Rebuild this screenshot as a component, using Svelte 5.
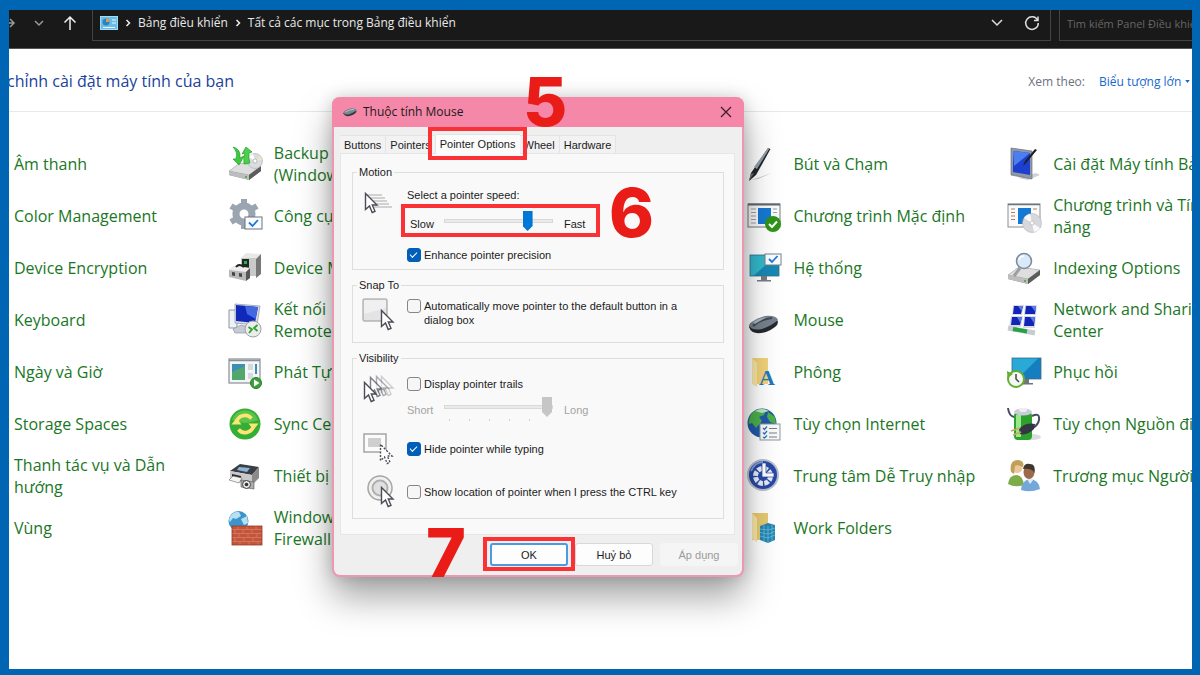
<script>
  const columns = [
    {
      col: 1,
      items: [
        { label: 'Âm thanh' },
        { label: 'Color Management' },
        { label: 'Device Encryption' },
        { label: 'Keyboard' },
        { label: 'Ngày và Giờ' },
        { label: 'Storage Spaces' },
        { label: 'Thanh tác vụ và Dẫn\nhướng' },
        { label: 'Vùng' }
      ]
    },
    {
      col: 2,
      items: [
        { icon: 'backup', label: 'Backup\n(Windows' },
        { icon: 'tools', label: 'Công cụ' },
        { icon: 'devices', label: 'Device M' },
        { icon: 'remote', label: 'Kết nối\nRemote' },
        { icon: 'autoplay', label: 'Phát Tự' },
        { icon: 'sync', label: 'Sync Cen' },
        { icon: 'printer', label: 'Thiết bị' },
        { icon: 'firewall', label: 'Windows\nFirewall' }
      ]
    },
    {
      col: 4,
      items: [
        { icon: 'pen', label: 'Bút và Chạm' },
        { icon: 'defaults', label: 'Chương trình Mặc định' },
        { icon: 'system', label: 'Hệ thống' },
        { icon: 'mouse', label: 'Mouse' },
        { icon: 'fonts', label: 'Phông' },
        { icon: 'internet', label: 'Tùy chọn Internet' },
        { icon: 'access', label: 'Trung tâm Dễ Truy nhập' },
        { icon: 'workfolders', label: 'Work Folders' }
      ]
    },
    {
      col: 5,
      items: [
        { icon: 'tablet', label: 'Cài đặt Máy tính Bảng' },
        { icon: 'programs', label: 'Chương trình và Tính\nnăng' },
        { icon: 'indexing', label: 'Indexing Options' },
        { icon: 'network', label: 'Network and Sharing\nCenter' },
        { icon: 'recovery', label: 'Phục hồi' },
        { icon: 'power', label: 'Tùy chọn Nguồn điện' },
        { icon: 'users', label: 'Trương mục Người' }
      ]
    }
  ];
  let speed = $state(8);
  let trail = $state(10);
  let precision = $state(true);
  let snap = $state(false);
  let trails = $state(false);
  let hide = $state(true);
  let locate = $state(false);
</script>

{#snippet arrow(x, y, o = 1, dash = false)}
  <path
    transform="translate({x} {y})"
    d="M.5 .5V16.500L4.500 13L7.200 19.500L10 18.300L7.300 12H12Z"
    fill="#fff"
    stroke="#4a4d55"
    stroke-width="1.400"
    opacity={o}
    stroke-dasharray={dash ? '2 1.500' : 'none'}
  />
{/snippet}

{#snippet drive()}
  <path d="M2 25L13 17L34 20V25L22 34L2 29Z" fill="#8b8b8b" />
  <path d="M2 25L13 17L34 20L22 29Z" fill="#dedede" stroke="#aaa" stroke-width=".5" />
  <path d="M2 25L22 29V34L2 29Z" fill="#bdbdbd" />
  <path d="M22 29L34 20V25L22 34Z" fill="#5c5c5c" />
  <circle cx="19" cy="31" r="1" fill="#27b427" />
{/snippet}

{#snippet icon(name)}
  <svg class="icon" viewBox="0 0 36 36" aria-hidden="true">
    {#if name === 'backup'}
      {@render drive()}
      <circle cx="28" cy="15" r="7.500" fill="#d9dce0" stroke="#b3b5ba" stroke-width=".7" />
      <path d="M28 15L33 10A7 7 0 0 1 35 14Z" fill="#f0e4c8" />
      <path d="M28 15L22 11A7 7 0 0 1 26 8Z" fill="#fff" />
      <circle cx="28" cy="15" r="2" fill="#fff" stroke="#999" stroke-width=".6" />
      <path d="M6 1Q14 3 13 12L17 10L12 19L6 13L9 13Q11 6 6 1Z" fill="#3fc93f" stroke="#1f9d28" stroke-width=".7" />
      <path d="M15 8L19 1L25 6L22 7Q21 12 23 17L17 18Q16 12 18 7Z" fill="#4bd04a" stroke="#1f9d28" stroke-width=".7" />
    {:else if name === 'tools'}
      <circle cx="17" cy="16" r="8" fill="none" stroke="#9aa5b1" stroke-width="7" />
      <g stroke="#9aa5b1" stroke-width="6">
        <path d="M17 6V1M17 26V31M9 11L4 8M25 11L30 8M9 21L4 24M25 21L29 24" />
      </g>
      <rect x="18" y="19" width="17" height="12" fill="#fafcff" stroke="#6b747e" />
      <path d="M22 24.500L25.500 28L31 22" fill="none" stroke="#1c79d8" stroke-width="1.800" />
    {:else if name === 'devices'}
      <path d="M14 8L19 3L34 4L29 9Z" fill="#e8e8e8" />
      <path d="M29 9L34 4V24L29 28Z" fill="#777" />
      <rect x="14" y="8" width="15" height="18" fill="#c9c9c9" />
      <rect x="15" y="9" width="7" height="9" fill="#1c2b22" />
      <path d="M17 11H20V14H17Z" fill="#2faf52" />
      <path d="M2 20L7 16L23 18L19 22V31L2 27Z" fill="#b9b9b9" />
      <path d="M2 20L7 16L23 18L19 22Z" fill="#ededed" />
      <path d="M19 22L23 18V28L19 31Z" fill="#555" />
      <path d="M5 22L8 22.500V26L5 25.500ZM12 23L15 23.500V27L12 26.500Z" fill="#444" />
      <path d="M9 17Q12 13 17 17" stroke="#222" stroke-width="2" fill="none" />
    {:else if name === 'remote'}
      <path d="M2 8H10V26H2Z" fill="#eef1f5" stroke="#8b93a3" />
      <path d="M8 2L33 4L30 23L8 21Z" fill="#d9dde5" stroke="#8b93a3" stroke-width=".7" />
      <path d="M9 3L31 5L28 21L9 19Z" fill="#1029b8" />
      <path d="M18 4L31 5L28.500 17L20 12Z" fill="#4467e2" />
      <path d="M6 27L14 23L22 25L20 31H8Z" fill="#c6cbd4" stroke="#8b93a3" stroke-width=".7" />
      <circle cx="26" cy="27" r="8" fill="#ececec" stroke="#9da0a5" />
      <path d="M21.500 25L25 27.500L22 31M30.500 23L27 26L30.500 29" fill="none" stroke="#2da32d" stroke-width="1.800" />
    {:else if name === 'autoplay'}
      <rect x="2" y="5" width="31" height="24" fill="#f3f5f7" stroke="#8a9097" stroke-width="1.200" />
      <path d="M2 6.500H33" stroke="#8a9097" stroke-width="1.500" />
      <rect x="5" y="10" width="13" height="16" fill="#3d8fb4" />
      <path d="M5 26V18L18 12V26Z" fill="#52a86c" />
      <path d="M21 10H26V16H21ZM21 19H26V25H21Z" fill="#d6dade" />
      <path d="M29 10V20" stroke="#3d8fb4" stroke-width="2" />
      <circle cx="29" cy="29" r="5.500" fill="#3e9f3b" stroke="#2b7c2a" />
      <path d="M27 25.500L32.500 29L27 32.500Z" fill="#fff" />
    {:else if name === 'sync'}
      <circle cx="18" cy="18" r="15.500" fill="#35ae35" />
      <path d="M5 14A13.500 13.500 0 0 1 31 14Q18 20 5 14Z" fill="#5ac548" />
      <path d="M9.500 17A8.500 8.500 0 0 1 24.500 12.500" fill="none" stroke="#fbe675" stroke-width="3.600" />
      <path d="M26.500 19A8.500 8.500 0 0 1 11.500 23.500" fill="none" stroke="#fbe675" stroke-width="3.600" />
      <path d="M4.500 18.500L9.500 12L14.500 18.500ZM21.500 17.500L26.500 24L31.500 17.500Z" fill="#fbe675" />
    {:else if name === 'printer'}
      <path d="M3 13L13 6L32 9L25 17Z" fill="#3b3e44" />
      <path d="M12 9L23 10L20 14L10 12Z" fill="#8ab7d8" />
      <path d="M3 13L25 17V27L3 22Z" fill="#c9c9c9" />
      <path d="M25 17L32 9V20L25 27Z" fill="#8a8a8a" />
      <path d="M5 16L14 18V21L5 19Z" fill="#25272a" />
      <path d="M2 22L6 18L15 20L12 25Z" fill="#f3f3f3" stroke="#666" stroke-width=".6" />
      <path d="M14 22L27 24V31L14 29Z" fill="#a9acb1" stroke="#555" stroke-width=".6" />
      <circle cx="19.500" cy="26.500" r="4" fill="#e6e6e6" stroke="#444" />
      <circle cx="19.500" cy="26.500" r="1.800" fill="#333" />
    {:else if name === 'firewall'}
      <circle cx="11.500" cy="11" r="10" fill="#3d94cc" />
      <path d="M4 5Q8 1 12 2L14 6L9 9L6 8L3 12Q1 9 4 5ZM14 9L20 6L21 13L17 15Z" fill="#b7e0f2" />
      <rect x="5" y="16" width="30" height="19" fill="#c3553b" />
      <path d="M5 19.500H35M5 23.500H35M5 27.500H35M5 31.500H35M11 16V19.500M20 16V19.500M29 16V19.500M8 20V23.500M16 20V23.500M25 20V23.500M12 24V27.500M21 24V27.500M30 24V27.500M8 28V31.500M17 28V31.500M26 28V31.500M13 32V35M22 32V35M31 32V35" stroke="#d98468" stroke-width=".7" />
      <rect x="5" y="16" width="30" height="19" fill="none" stroke="#983b26" stroke-width=".8" />
    {:else if name === 'pen'}
      <path d="M5 34L26 27L12 33Z" fill="#ccc" />
      <path d="M22 2L24.500 3L10 29L3 35L5 27Z" fill="#23272c" />
      <path d="M22 2L23.500 2.500L11 23L8 21Z" fill="#8fa0ab" />
      <path d="M5 28L8 27L3 35Z" fill="#6b767d" />
    {:else if name === 'defaults'}
      <rect x="2" y="6" width="32" height="23" fill="#fafafa" stroke="#777c82" />
      <path d="M2 6.500H34" stroke="#62686e" stroke-width="2" />
      <path d="M5 11H10M5 14.500H10M5 18H10M5 21.500H10M5 25H10M27 11H31M27 14.500H31" stroke="#9aa0a6" />
      <rect x="12" y="10" width="13" height="16" fill="#1679d3" />
      <circle cx="27" cy="26" r="8" fill="#2f9418" />
      <path d="M23 26L26 29L31 23.500" fill="none" stroke="#fff" stroke-width="2" />
    {:else if name === 'system'}
      <rect x="4" y="5" width="29" height="21" fill="#1689b5" stroke="#3d6d80" stroke-width=".8" />
      <path d="M4.500 5.500H30L8 25.500H4.500Z" fill="#34b9cc" />
      <path d="M15 26H21V30H25V31.500H11V30H15Z" fill="#777d82" />
      <rect x="19" y="4" width="16" height="11" fill="#fbfdff" stroke="#75808a" />
      <path d="M23 9L26 12L31.500 6" fill="none" stroke="#1c79d8" stroke-width="1.800" />
    {:else if name === 'mouse'}
      <path d="M3 25Q4 19 18 15Q30 13 32 20Q32 25 20 30Q6 34 3 25Z" fill="#25282c" />
      <path d="M3 23Q6 18 19 14Q30 13 32 18Q27 23 16 27Q5 29 3 23Z" fill="#77828e" />
      <path d="M7 24Q13 18 26 16" fill="none" stroke="#414a53" stroke-width="2" />
      <path d="M7 20Q13 16 21 15L14 19L9 22Z" fill="#a9b4be" />
    {:else if name === 'fonts'}
      <path d="M6 4H22V30L11 30L6 29Z" fill="#f2d37a" />
      <path d="M6 4L11 9V33L6 30Z" fill="#fae7a8" />
      <text x="13" y="31" font-family="Liberation Serif" font-weight="bold" font-size="22" fill="#1f79b8">A</text>
    {:else if name === 'internet'}
      <circle cx="16" cy="17" r="14.500" fill="#2159a9" />
      <path d="M6 7Q12 1 20 4L18 9L13 11L16 15L10 22L6 17L3 18Q2 12 6 7ZM22 6L29 11L30 18L24 16L21 11Z" fill="#4cb04c" />
      <path d="M9 5Q16 1 23 5L16 7Z" fill="#b8e6c0" />
      <rect x="14" y="18" width="20" height="16" fill="#f8fafc" stroke="#8f979f" />
      <path d="M17 22L18.500 23.500L21 20.500M17 26.500L18.500 28L21 25M17 31L18.500 32L21 29.500" fill="none" stroke="#2a72ba" stroke-width="1.300" />
      <path d="M23 22.500H31M23 27H31M23 31H31" stroke="#798087" />
    {:else if name === 'access'}
      <circle cx="17" cy="17" r="15" fill="#2949a6" stroke="#b9bfcc" stroke-width="2" />
      <circle cx="17" cy="18" r="7.500" fill="none" stroke="#e8effb" stroke-width="5" stroke-dasharray="4.500 1.400" />
      <path d="M16 5H20V15H28V19H16Z" fill="#fff" stroke="#2949a6" stroke-width=".7" />
      <path d="M5 13Q9 4 17 4" stroke="#7f9ae0" stroke-width="2" fill="none" />
    {:else if name === 'workfolders'}
      <path d="M6 3H22V30H6Z" fill="#e8ca73" />
      <path d="M6 3L11 8V32L6 29Z" fill="#fae7a8" />
      <path d="M14 16L22 13L29 15V30L22 33L14 30Z" fill="#2387b4" />
      <path d="M14 19L22 20L29 18M14 22.500L22 24L29 21.500M14 26L22 28L29 25M18 15V31M22 16V33M26 15V31" fill="none" stroke="#6dbcdb" stroke-width=".8" />
    {:else if name === 'tablet'}
      <path d="M12 32L30 27L34 29L22 34Z" fill="#d2d2d2" />
      <path d="M5 2L26 5V33L5 29Z" fill="#9098a5" stroke="#6b7380" stroke-width=".7" />
      <path d="M7 5L24 7V29L7 26Z" fill="#1d3fd0" />
      <path d="M7 5L24 7L8 20Z" fill="#4c7ef0" />
      <path d="M31 4L20 17L17 20L19 15L29 3Z" fill="#1d1f24" />
    {:else if name === 'programs'}
      <rect x="2" y="6" width="32" height="23" fill="#fafafa" stroke="#8b9096" />
      <path d="M2 6.500H34" stroke="#6f757b" stroke-width="1.500" />
      <path d="M5 11H9M5 14.500H9M5 18H9M5 21.500H9M27 11H31" stroke="#b17c6c" />
      <rect x="12" y="10" width="13" height="16" fill="#1679d3" />
      <circle cx="26" cy="25" r="9.500" fill="#d6d8db" stroke="#b1b4b8" stroke-width=".6" />
      <path d="M26 25L18 20A9 9 0 0 1 24 16ZM26 25L34 30A9 9 0 0 1 28 34Z" fill="#fafafa" />
      <circle cx="26" cy="25" r="2" fill="#fff" stroke="#aaa" stroke-width=".6" />
    {:else if name === 'indexing'}
      {@render drive()}
      <path d="M14 18L8 26" stroke="#9b9ea3" stroke-width="3" />
      <circle cx="18" cy="11" r="7.500" fill="#d9ebfa" stroke="#7f8b99" stroke-width="1.600" />
      <path d="M13 10Q14 6 18 6" stroke="#fff" stroke-width="1.500" fill="none" />
    {:else if name === 'network'}
      <path d="M7 3H18L16 13H6ZM19 3H31L30 13H18ZM5 14H17L15 25H3ZM18 14H30L29 26H17Z" fill="#d5dae4" />
      <path d="M8 4H17L15 12H7ZM20 4H30L29 12H19ZM6 15H16L14 23H5ZM19 15H29L28 24H18Z" fill="#1325b8" />
      <path d="M12 4H17L15.500 9ZM25 4H30L29.500 10ZM11 15H16L14.500 21ZM24 15H29L28 21Z" fill="#5c7be8" />
      <path d="M2 26L29 31" stroke="#c8ccd0" stroke-width="5" />
      <path d="M7 27L21 29.500" stroke="#25a344" stroke-width="4" />
    {:else if name === 'recovery'}
      <rect x="6" y="4" width="29" height="21" fill="#147ec0" stroke="#416d84" stroke-width=".8" />
      <path d="M6.500 4.500H32L12 24.500H6.500Z" fill="#2aa9d6" />
      <path d="M18 25H23V29H27V30.500H15V29H18Z" fill="#6f757a" />
      <circle cx="10" cy="25" r="8" fill="#f5f7f5" stroke="#65ad2c" stroke-width="2" />
      <path d="M1 17L1.500 24L7 20Z" fill="#65ad2c" />
      <path d="M10 20V25L13 28" fill="none" stroke="#444" stroke-width="1.500" />
    {:else if name === 'power'}
      <ellipse cx="26" cy="31" rx="9" ry="3" fill="#ddd" />
      <path d="M2 2Q3 10 8 11M26 10Q34 6 33 14Q32 19 27 22" stroke="#454c60" stroke-width="2" fill="none" />
      <rect x="8" y="6" width="18" height="28" rx="4" fill="#2ca22c" />
      <path d="M10 9H15V31H10Z" fill="#9be78d" />
      <ellipse cx="17" cy="6" rx="9" ry="3.500" fill="#c9ccdc" />
      <ellipse cx="17" cy="4" rx="4" ry="2" fill="#eee" />
      <path d="M13 23Q20 16 29 18L28 23Q21 30 14 28Z" fill="#323743" />
      <path d="M5 25L14 22M7 29L15 26" stroke="#c6a869" stroke-width="1.800" />
    {:else if name === 'users'}
      <path d="M2 26Q3 17 11 17Q17 18 18 27Q9 30 2 26Z" fill="#7eac4a" />
      <circle cx="11" cy="9.500" r="5.500" fill="#edc79c" />
      <path d="M5 14Q3 2 12 2Q19 3 17 9Q11 6 9 8L8 16Z" fill="#c1a15a" />
      <path d="M15 32Q16 22 24 21Q33 22 34 31Q24 35 15 32Z" fill="#75a8da" />
      <path d="M21 21L24 26L28 21Z" fill="#dcecf8" />
      <ellipse cx="23" cy="14" rx="5.500" ry="7" fill="#9d6b4a" />
      <path d="M17 11Q18 5 24 6Q30 6 28.500 15Q26 10 17 11Z" fill="#3f3831" />
    {/if}
  </svg>
{/snippet}

<div class="screen">
  <header class="topbar">
    <div class="nav">
      <svg class="forward" viewBox="0 0 12 14" aria-hidden="true"><path d="M0 7H4M1 3L5 7L1 11" /></svg>
      <svg class="recent" viewBox="0 0 12 14" aria-hidden="true"><path d="M2 5L6 9L10 5" /></svg>
      <svg class="up" viewBox="0 0 14 16" aria-hidden="true"><path d="M7 15V2M1.500 7.500L7 2L12.500 7.500" /></svg>
    </div>
    <nav class="address">
      <svg class="panel-icon" viewBox="0 0 18 14" aria-hidden="true">
        <rect x=".5" y=".5" width="17" height="13" fill="#68bce8" stroke="#a5daf5" />
        <circle cx="6" cy="6" r="3.500" fill="#2d82c4" />
        <path d="M6 6V2.500A3.500 3.500 0 0 1 9.500 6Z" fill="#e79a3c" />
        <path d="M12 4H16M12 7H16M3 11.500H15" stroke="#e9f6fd" />
      </svg>
      <svg class="sep" viewBox="0 0 6 8" aria-hidden="true"><path d="M1.500 1L4.500 4L1.500 7" /></svg>
      <a href="#panel">Bảng điều khiển</a>
      <svg class="sep" viewBox="0 0 6 8" aria-hidden="true"><path d="M1.500 1L4.500 4L1.500 7" /></svg>
      <a href="#all">Tất cả các mục trong Bảng điều khiển</a>
      <span class="grow"></span>
      <svg class="down" viewBox="0 0 12 14" aria-hidden="true"><path d="M1 4L6 9L11 4" /></svg>
      <svg class="refresh" viewBox="0 0 16 16" aria-hidden="true"><path d="M13.500 5A6.300 6.300 0 1 0 14.300 8M14 1.500V5.500H10" /></svg>
    </nav>
    <input class="search" type="text" aria-label="Tìm kiếm" placeholder="Tìm kiếm Panel Điều khiển" />
  </header>

  <div class="heading">
    <h1>chỉnh cài đặt máy tính của bạn</h1>
    <div class="view">
      <label for="view">Xem theo:</label>
      <select id="view"><option>Biểu tượng lớn</option></select>
      <svg viewBox="0 0 6 4" aria-hidden="true"><path d="M0 0H6L3 4Z" fill="#1768cf" /></svg>
    </div>
  </div>

  <main class="items">
    {#each columns as c}
      <div class="column" style="grid-column: {c.col}">
        {#each c.items as item}
          <a class="item" href="#item">
            {@render icon(item.icon)}
            <span>{item.label}</span>
          </a>
        {/each}
      </div>
    {/each}
  </main>

  <div class="dialog" role="dialog" aria-labelledby="title">
    <div class="titlebar">
      <svg class="mini" viewBox="3 12 31 20" aria-hidden="true">
        <path d="M4 25Q5 19 19 15Q31 13 33 20Q33 25 21 30Q7 34 4 25Z" fill="#33383d" />
        <path d="M4 23Q7 18 20 14Q31 13 33 18Q28 23 17 27Q6 29 4 23Z" fill="#748b92" />
        <path d="M8 22Q14 17 27 16" fill="none" stroke="#bccbd0" stroke-width="2" />
      </svg>
      <span id="title">Thuộc tính Mouse</span>
      <button class="close" aria-label="Close">
        <svg viewBox="0 0 12 12" aria-hidden="true"><path d="M1 1L11 11M11 1L1 11" /></svg>
      </button>
    </div>

    <div class="tabs" role="tablist">
      <button role="tab">Buttons</button>
      <button role="tab">Pointers</button>
      <div class="marked">
        <button role="tab" class="active" aria-selected="true">Pointer Options</button>
        <span class="mark tab-mark"></span>
      </div>
      <button role="tab">Wheel</button>
      <button role="tab">Hardware</button>
    </div>

    <div class="panel">
      <fieldset class="motion">
        <legend>Motion</legend>
        <svg class="pic" viewBox="0 0 36 36" aria-hidden="true">
          <path d="M4 8H20M6 11H23M8 14H25M10 17H27M12 20H30" stroke="#c4c4c4" stroke-width="1.500" />
          {@render arrow(3, 6)}
        </svg>
        <div class="stack">
          <label class="caption" for="speed">Select a pointer speed:</label>
          <div class="slide">
            <span class="from near">Slow</span>
            <span class="range"><input id="speed" type="range" min="0" max="10" bind:value={speed} /></span>
            <span>Fast</span>
            <span class="mark speed-mark"></span>
          </div>
          <label class="check"><input type="checkbox" bind:checked={precision} />Enhance pointer precision</label>
        </div>
      </fieldset>

      <fieldset class="snap">
        <legend>Snap To</legend>
        <svg class="pic" viewBox="0 0 36 36" aria-hidden="true">
          <rect x="1" y="1" width="24" height="22" rx="1" fill="#e4e4e4" stroke="#989898" />
          <path d="M2 2H24V10L2 16Z" fill="#f0f0f0" />
          {@render arrow(19, 12)}
        </svg>
        <label class="check"><input type="checkbox" bind:checked={snap} /><span>Automatically move pointer to the default button in a<br />dialog box</span></label>
      </fieldset>

      <fieldset class="visibility">
        <legend>Visibility</legend>
        <svg class="pic" viewBox="0 0 36 36" aria-hidden="true">
          {@render arrow(19, 4, 0.25)}
          {@render arrow(14, 4, 0.45)}
          {@render arrow(8, 5, 0.7)}
          {@render arrow(2, 10)}
        </svg>
        <div class="stack">
          <label class="check"><input type="checkbox" bind:checked={trails} />Display pointer trails</label>
          <div class="slide off">
            <label class="from" for="trail">Short</label>
            <span class="range"><input id="trail" type="range" min="0" max="10" disabled bind:value={trail} /></span>
            <span>Long</span>
          </div>
        </div>
        <svg class="pic" viewBox="0 0 36 36" aria-hidden="true">
          <rect x="2" y="3" width="22" height="18" fill="#fbfbfb" stroke="#a5a5a5" stroke-width="1.500" />
          <rect x="6" y="7" width="13" height="9" fill="#cfcfcf" />
          {@render arrow(18, 13, 1, true)}
        </svg>
        <label class="check"><input type="checkbox" bind:checked={hide} />Hide pointer while typing</label>
        <svg class="pic" viewBox="0 0 36 36" aria-hidden="true">
          <circle cx="18" cy="14" r="12" fill="#f0f0f0" stroke="#a5a5a5" stroke-width="1.500" />
          <circle cx="18" cy="14" r="7.500" fill="#e0e0e0" stroke="#b0b0b0" stroke-width="2" />
          {@render arrow(19, 13)}
        </svg>
        <label class="check"><input type="checkbox" bind:checked={locate} />Show location of pointer when I press the CTRL key</label>
      </fieldset>
    </div>

    <div class="actions">
      <div class="marked">
        <button class="ok">OK</button>
        <span class="mark ok-mark"></span>
      </div>
      <button>Huỷ bỏ</button>
      <button disabled>Áp dụng</button>
    </div>

    <span class="step five">5</span>
    <span class="step six">6</span>
    <span class="step seven">7</span>
  </div>
</div>

<style>
  :global(body) {
    margin: 0;
  }
  .screen {
    position: relative;
    box-sizing: border-box;
    min-height: 100vh;
    border: solid #0066b3;
    border-width: 10px 8px 6px 9px;
    background: #fff;
    overflow: hidden;
    font-family: 'Open Sans', 'Noto Sans', sans-serif;
    font-size: 12px;
  }
  a {
    color: inherit;
    text-decoration: none;
  }
  svg {
    flex: none;
  }

  .topbar {
    display: flex;
    height: 39px;
    background: #191919;
    border-bottom: 1px solid #555;
    box-sizing: border-box;
    color: #e8e8e8;
  }
  .nav svg,
  .sep,
  .down,
  .refresh {
    fill: none;
    stroke-width: 1.500;
  }
  .nav {
    display: flex;
    align-items: center;
    width: 83px;
    height: 26px;
  }
  .forward {
    width: 12px;
    height: 14px;
    stroke: #999;
  }
  .recent {
    width: 12px;
    height: 14px;
    margin-left: 12px;
    stroke: #999;
  }
  .up {
    width: 14px;
    height: 16px;
    margin-left: 18px;
    stroke: #eee;
  }
  .address {
    flex: 1;
    display: flex;
    align-items: center;
    gap: 7px;
    box-sizing: border-box;
    height: 31px;
    padding: 0 10px 5px 7px;
    border: 1px solid #434343;
    border-top: 0;
  }
  .panel-icon {
    width: 18px;
    height: 14px;
  }
  .sep {
    width: 6px;
    height: 8px;
    stroke: #eee;
  }
  .grow {
    flex: 1;
  }
  .down {
    width: 12px;
    height: 14px;
    margin-right: 14px;
    stroke: #ddd;
  }
  .refresh {
    width: 16px;
    height: 16px;
    stroke: #ddd;
  }
  .search {
    box-sizing: border-box;
    width: 133px;
    height: 31px;
    margin-left: 8px;
    padding: 0 0 4px 7px;
    border: 1px solid #434343;
    border-width: 0 0 1px 1px;
    background: none;
    color: #ccc;
    font: inherit;
    font-size: 11px;
  }
  .search::placeholder {
    color: #666;
  }

  .heading {
    display: flex;
    align-items: center;
    justify-content: space-between;
    height: 60px;
    padding-top: 2px;
    border-bottom: 1px solid #e3eaee;
  }
  h1 {
    margin: 0 0 0 -2px;
    font-size: 16px;
    font-weight: 400;
    line-height: 22px;
    color: #213f9c;
  }
  .view {
    display: flex;
    align-items: center;
    padding-right: 2px;
    color: #6b7280;
  }
  select {
    appearance: none;
    margin-left: 14px;
    padding: 0 3px 0 0;
    border: 0;
    background: none;
    color: #1768cf;
    font: inherit;
  }
  .view svg {
    width: 5px;
    height: 3px;
  }

  .items {
    display: grid;
    grid-template-columns: repeat(5, 1fr);
    margin: 26px -74px 0 -42px;
  }
  .column {
    grid-row: 1;
  }
  .item {
    display: flex;
    align-items: center;
    gap: 11px;
    height: 52px;
    font-size: 16px;
    line-height: 22px;
    white-space: pre;
    color: #1a771f;
  }
  .icon {
    width: 36px;
    height: 36px;
  }

  .dialog {
    position: absolute;
    left: 323px;
    top: 87px;
    box-sizing: border-box;
    width: 412px;
    border: 2px solid #ee97b1;
    border-top: 0;
    border-radius: 8px;
    background: #efefef;
    box-shadow: 0 20px 36px rgba(0, 0, 0, 0.36), 0 0 16px rgba(0, 0, 0, 0.16);
    font: 11px/14px 'Liberation Sans', Arial, sans-serif;
    color: #1b1b1b;
  }
  .titlebar {
    display: flex;
    align-items: center;
    height: 30px;
    margin: 0 -2px;
    padding: 0 12px 0 11px;
    border-radius: 8px 8px 0 0;
    background: #f588a9;
    font: 12px/16px 'Open Sans', 'Noto Sans', sans-serif;
  }
  .mini {
    width: 14px;
    height: 10px;
    margin-right: 6px;
  }
  .close {
    margin-left: auto;
    padding: 0;
    border: 0;
    background: none;
  }
  .close svg {
    display: block;
    width: 12px;
    height: 12px;
    stroke: #3d1f29;
    stroke-width: 1.300;
  }

  .tabs {
    display: flex;
    align-items: flex-end;
    height: 26px;
    padding-left: 6px;
  }
  .tabs button {
    height: 18px;
    padding: 0 4px;
    border: solid #e4e4e4;
    border-width: 1px 1px 0 0;
    background: #f2f2f2;
    color: inherit;
    font: inherit;
  }
  .marked {
    position: relative;
  }
  .tabs .active {
    position: relative;
    display: block;
    height: 20px;
    padding: 0 4px 1px;
    margin-bottom: -1px;
    border-right: 0;
    background: #fbfbfb;
  }
  .mark {
    position: absolute;
    z-index: 1;
    border: 4px solid #fa3236;
    pointer-events: none;
  }
  .tab-mark {
    inset: -7px -7px -7px -8px;
  }

  .panel {
    display: flex;
    flex-direction: column;
    gap: 8px;
    margin: 0 7px 0 6px;
    padding: 11px 10px 15px 11px;
    border: 1px solid #e6e6e6;
    background: #f9f9f9;
  }
  fieldset {
    display: grid;
    grid-template-columns: 45px 1fr;
    min-width: 0;
    margin: 0;
    border: 1px solid #dedede;
  }
  legend {
    margin-left: -5px;
    padding: 0 2px;
  }
  .motion {
    padding: 8px 9px 2px;
  }
  .snap {
    padding: 6px 9px 8px;
  }
  .visibility {
    grid-template-rows: 56px 42px 43px;
    align-items: center;
    padding: 7px 9px 5px;
  }
  .pic {
    width: 36px;
    height: 36px;
  }
  .visibility > .pic:first-of-type,
  .visibility > .stack {
    align-self: start;
  }
  .stack {
    display: flex;
    flex-direction: column;
    gap: 8px;
  }
  .visibility > .stack {
    gap: 1px;
  }
  .caption {
    line-height: 16px;
  }
  .slide {
    position: relative;
    display: flex;
    line-height: 26px;
    height: 24px;
  }
  .from {
    width: 37px;
  }
  .near {
    box-sizing: border-box;
    padding-left: 3px;
  }
  .range {
    width: 109px;
    height: 24px;
    margin-right: 11px;
    background: repeating-linear-gradient(90deg, #d0d0d0 0 1px, transparent 1px 20px) 5px 22px / 100px 2px no-repeat;
  }
  input[type='range'] {
    appearance: none;
    display: block;
    width: 100%;
    height: 20px;
    margin: 0;
    background: none;
  }
  input[type='range']::-webkit-slider-runnable-track {
    box-sizing: border-box;
    height: 4px;
    border: 1px solid #d9d9d9;
    background: #eaeaea;
  }
  input[type='range']::-webkit-slider-thumb {
    appearance: none;
    width: 10px;
    height: 20px;
    margin-top: -9px;
    background: #0078d7;
    clip-path: polygon(0 0, 100% 0, 100% 75%, 50% 100%, 0 75%);
  }
  .off {
    color: #a3a3a3;
  }
  .off input[type='range']::-webkit-slider-thumb {
    background: #c6c6c6;
  }
  .speed-mark {
    inset: -7px auto -2px -6px;
    width: 191px;
  }
  .check {
    display: flex;
    align-items: center;
    gap: 3px;
    min-height: 24px;
  }
  .snap .check {
    align-items: flex-start;
    padding-top: 1px;
  }
  input[type='checkbox'] {
    appearance: none;
    flex: none;
    box-sizing: border-box;
    width: 14px;
    height: 14px;
    margin: 0;
    border: 1px solid #868686;
    border-radius: 3px;
    background: #f6f6f6;
  }
  input[type='checkbox']:checked {
    border-color: #005fb8;
    background: #005fb8;
  }
  input[type='checkbox']:checked::after {
    content: '';
    display: block;
    width: 6px;
    height: 3px;
    margin: 3px 0 0 2px;
    border: solid #fff;
    border-width: 0 0 1px 1px;
    transform: rotate(-45deg);
  }

  .actions {
    display: flex;
    justify-content: flex-end;
    gap: 7px;
    padding: 8px 4px 9px;
  }
  .actions button {
    display: block;
    width: 78px;
    height: 23px;
    padding: 0;
    border: 1px solid #d8d8d8;
    border-radius: 3px;
    background: #fdfdfd;
    color: inherit;
    font: inherit;
  }
  .actions .ok {
    border: 2px solid #4c9be0;
  }
  .actions button:disabled {
    border-color: #f5f5f5;
    background: #f5f5f5;
    color: #9b9b9b;
  }
  .ok-mark {
    inset: -6px -7px -5px;
  }
  .step {
    position: absolute;
    font: 800 68px/50px Inter, sans-serif;
    color: #ea1c17;
  }
  .five {
    left: 189px;
    top: -21px;
  }
  .six {
    left: 275px;
    top: 90px;
  }
  .seven {
    left: 92px;
    top: 430px;
  }
</style>
